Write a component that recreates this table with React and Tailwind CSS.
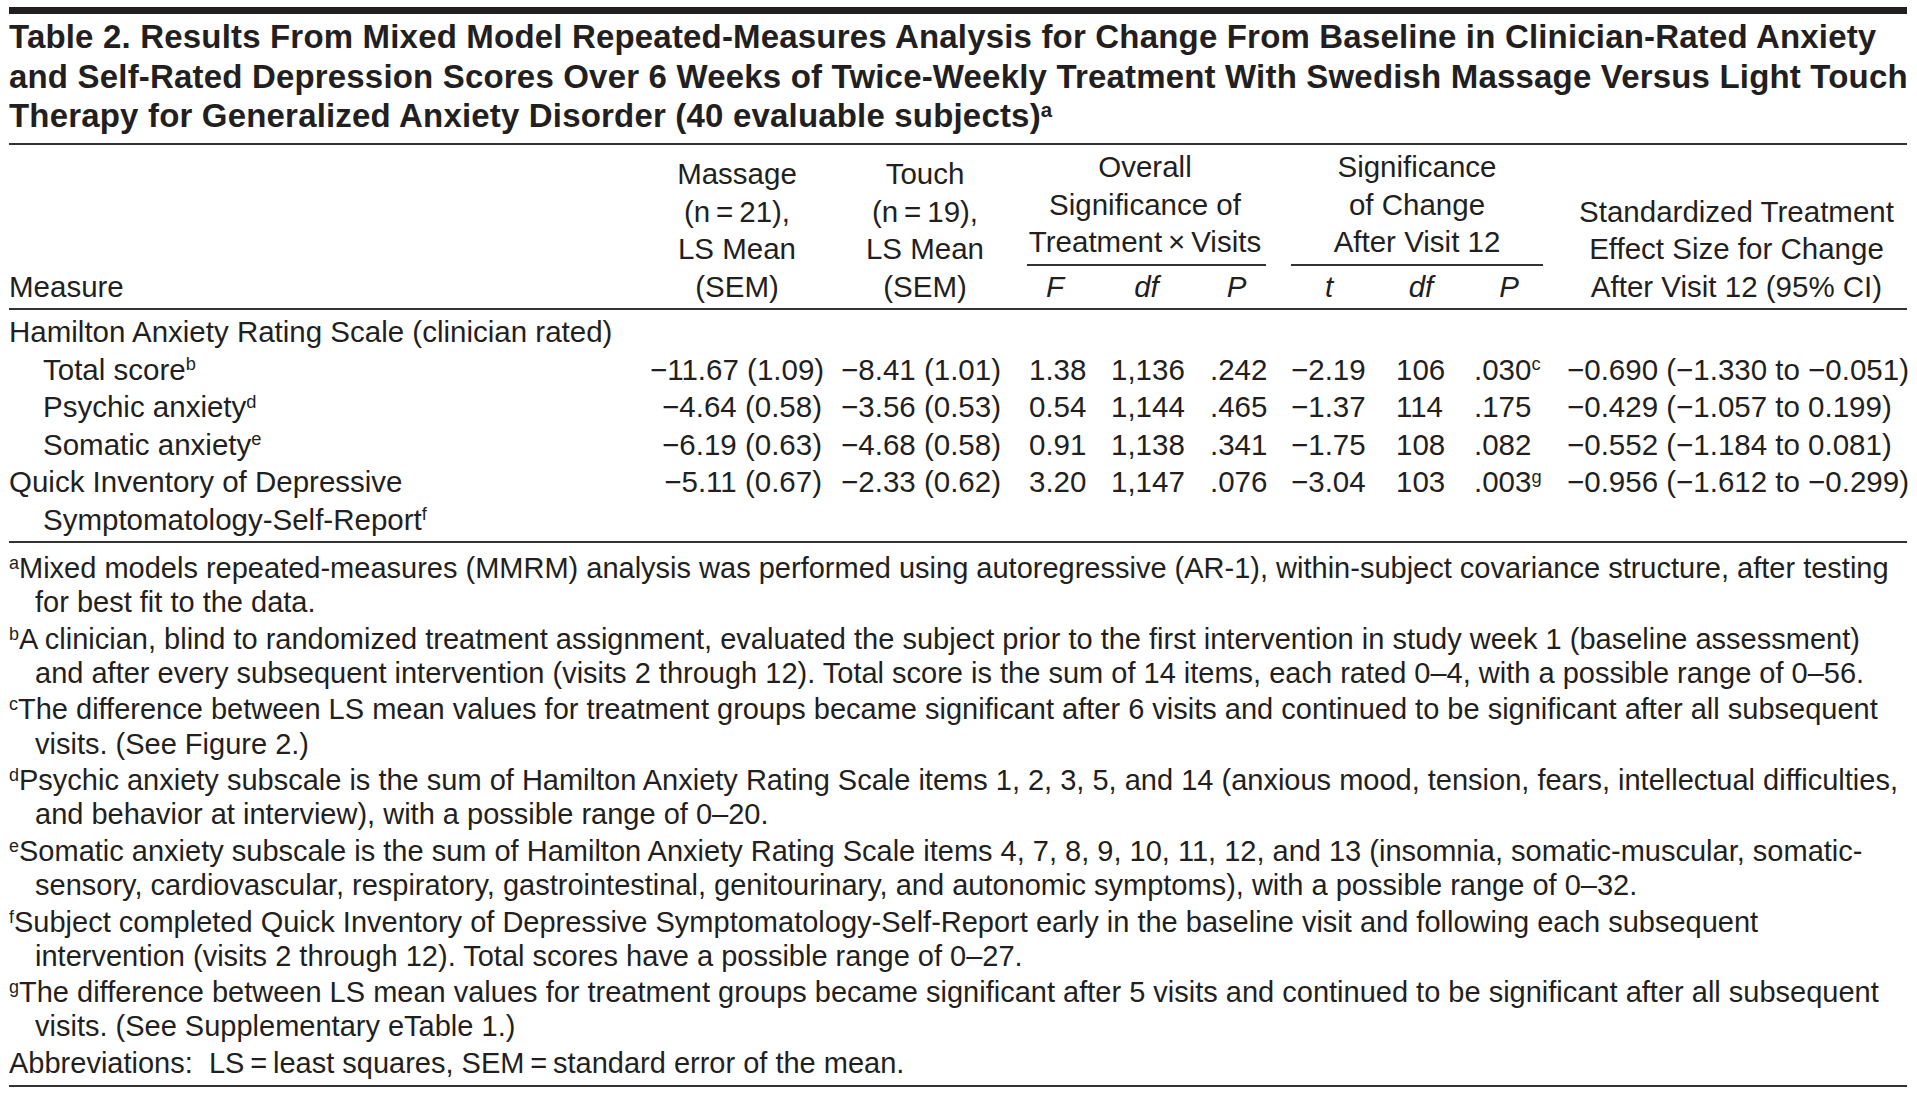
import React from "react";

const COLS =
  "grid grid-cols-[641px_180px_182px_86px_97px_83px_102px_82px_94px_351px]";

const rows = [
  {
    label: "Hamilton Anxiety Rating Scale (clinician rated)",
    head: true,
  },
  {
    label: (
      <>
        Total score<sup className="text-[62%]">b</sup>
      </>
    ),
    v: ["−11.67 (1.09)", "−8.41 (1.01)", "1.38", "1,136", ".242", "−2.19", "106"],
    p2: (
      <>
        .030<sup className="text-[62%]">c</sup>
      </>
    ),
    es: "−0.690 (−1.330 to −0.051)",
  },
  {
    label: (
      <>
        Psychic anxiety<sup className="text-[62%]">d</sup>
      </>
    ),
    v: ["−4.64 (0.58)", "−3.56 (0.53)", "0.54", "1,144", ".465", "−1.37", "114"],
    p2: ".175",
    es: "−0.429 (−1.057 to 0.199)",
  },
  {
    label: (
      <>
        Somatic anxiety<sup className="text-[62%]">e</sup>
      </>
    ),
    v: ["−6.19 (0.63)", "−4.68 (0.58)", "0.91", "1,138", ".341", "−1.75", "108"],
    p2: ".082",
    es: "−0.552 (−1.184 to 0.081)",
  },
  {
    label: (
      <>
        <div>Quick Inventory of Depressive</div>
        <div className="pl-[34px]">
          Symptomatology-Self-Report<sup className="text-[62%]">f</sup>
        </div>
      </>
    ),
    top: true,
    v: ["−5.11 (0.67)", "−2.33 (0.62)", "3.20", "1,147", ".076", "−3.04", "103"],
    p2: (
      <>
        .003<sup className="text-[62%]">g</sup>
      </>
    ),
    es: "−0.956 (−1.612 to −0.299)",
  },
];

const notes = [
  [
    "a",
    "Mixed models repeated-measures (MMRM) analysis was performed using autoregressive (AR-1), within-subject covariance structure, after testing",
    "for best fit to the data.",
  ],
  [
    "b",
    "A clinician, blind to randomized treatment assignment, evaluated the subject prior to the first intervention in study week 1 (baseline assessment)",
    "and after every subsequent intervention (visits 2 through 12). Total score is the sum of 14 items, each rated 0–4, with a possible range of 0–56.",
  ],
  [
    "c",
    "The difference between LS mean values for treatment groups became significant after 6 visits and continued to be significant after all subsequent",
    "visits. (See Figure 2.)",
  ],
  [
    "d",
    "Psychic anxiety subscale is the sum of Hamilton Anxiety Rating Scale items 1, 2, 3, 5, and 14 (anxious mood, tension, fears, intellectual difficulties,",
    "and behavior at interview), with a possible range of 0–20.",
  ],
  [
    "e",
    "Somatic anxiety subscale is the sum of Hamilton Anxiety Rating Scale items 4, 7, 8, 9, 10, 11, 12, and 13 (insomnia, somatic-muscular, somatic-",
    "sensory, cardiovascular, respiratory, gastrointestinal, genitourinary, and autonomic symptoms), with a possible range of 0–32.",
  ],
  [
    "f",
    "Subject completed Quick Inventory of Depressive Symptomatology-Self-Report early in the baseline visit and following each subsequent",
    "intervention (visits 2 through 12). Total scores have a possible range of 0–27.",
  ],
  [
    "g",
    "The difference between LS mean values for treatment groups became significant after 5 visits and continued to be significant after all subsequent",
    "visits. (See Supplementary eTable 1.)",
  ],
];

export default function App() {
  return (
    <div className="min-h-[1096px] bg-white pl-[9px] pr-[10px] pt-[7px] font-['Liberation_Sans',Arial,sans-serif] text-[#231f20]">
      {/* top bar */}
      <div className="h-[7px] bg-[#231f20]" />

      {/* title */}
      <div className="mt-[3px] whitespace-nowrap text-[33px] font-bold leading-[39.5px] tracking-[0.18px]">
        <div>
          Table 2. Results From Mixed Model Repeated-Measures Analysis for
          Change From Baseline in Clinician-Rated Anxiety
        </div>
        <div>
          and Self-Rated Depression Scores Over 6 Weeks of Twice-Weekly
          Treatment With Swedish Massage Versus Light Touch
        </div>
        <div>
          Therapy for Generalized Anxiety Disorder (40 evaluable subjects)
          <sup className="text-[62%] font-bold">a</sup>
        </div>
      </div>

      <div className="mt-[7.5px] h-[2px] bg-[#333333]" />

      {/* header */}
      <div className={`${COLS} whitespace-nowrap text-[29.5px] leading-[37.5px]`}>
        <div className="row-span-2 self-end pb-[3px]">Measure</div>
        <div className="row-span-2 self-end pb-[3px] pr-[6px] text-center">
          Massage
          <br />
          (n{"\u2009"}={"\u2009"}21),
          <br />
          LS Mean
          <br />
          (SEM)
        </div>
        <div className="row-span-2 self-end pb-[3px] pl-[8px] text-center">
          Touch
          <br />
          (n{"\u2009"}={"\u2009"}19),
          <br />
          LS Mean
          <br />
          (SEM)
        </div>
        <div className="col-span-3 pt-[3px] text-center">
          <div>
            Overall
            <br />
            Significance of
            <br />
            Treatment{"\u2009"}×{"\u2009"}Visits
          </div>
          <div className="ml-[15px] mr-[12px] mt-[3px] h-[2px] bg-[#333333]" />
        </div>
        <div className="col-span-3 pt-[3px] text-center">
          <div>
            Significance
            <br />
            of Change
            <br />
            After Visit 12
          </div>
          <div className="ml-[13px] mr-[13px] mt-[3px] h-[2px] bg-[#333333]" />
        </div>
        <div className="row-span-2 self-end pb-[3px] pl-[10px] text-center">
          Standardized Treatment
          <br />
          Effect Size for Change
          <br />
          After Visit 12 (95% CI)
        </div>
        <div className="pb-[3px] pt-[2px] text-center italic">F</div>
        <div className="pb-[3px] pt-[2px] text-center italic">df</div>
        <div className="pb-[3px] pt-[2px] text-center italic">P</div>
        <div className="pb-[3px] pt-[2px] text-center italic">t</div>
        <div className="pb-[3px] pt-[2px] text-center italic">df</div>
        <div className="pb-[3px] pt-[2px] text-center italic">P</div>
      </div>

      <div className="h-[2px] bg-[#333333]" />

      {/* body */}
      <div
        className={`${COLS} whitespace-nowrap pb-[3px] pt-[3px] text-[29.5px] leading-[37.5px]`}
      >
        {rows.map((r, i) =>
          r.head ? (
            <div key={i} className="col-span-10">
              {r.label}
            </div>
          ) : (
            <React.Fragment key={i}>
              <div className={r.top ? "" : "pl-[34px]"}>{r.label}</div>
              <div className="pr-[8px] text-right">{r.v[0]}</div>
              <div className="pr-[11px] text-right">{r.v[1]}</div>
              <div className="pl-[17px]">{r.v[2]}</div>
              <div className="pl-[13px]">{r.v[3]}</div>
              <div className="pl-[15px]">{r.v[4]}</div>
              <div className="pl-[13px]">{r.v[5]}</div>
              <div className="pl-[16px]">{r.v[6]}</div>
              <div className="pl-[12px]">{r.p2}</div>
              <div className="pl-[11px]">{r.es}</div>
            </React.Fragment>
          )
        )}
      </div>

      <div className="h-[2px] bg-[#333333]" />

      {/* footnotes */}
      <div className="flex flex-col gap-[2.3px] whitespace-nowrap pb-[5px] pt-[8px] text-[29px] leading-[34.2px]">
        {notes.map(([k, a, b]) => (
          <div key={k}>
            <div>
              <sup className="text-[62%]">{k}</sup>
              {a}
            </div>
            <div className="pl-[26px]">{b}</div>
          </div>
        ))}
        <div>
          Abbreviations:{"\u00a0 "}LS{"\u2009"}={"\u2009"}least squares, SEM
          {"\u2009"}={"\u2009"}standard error of the mean.
        </div>
      </div>

      <div className="h-[2px] bg-[#333333]" />
    </div>
  );
}
